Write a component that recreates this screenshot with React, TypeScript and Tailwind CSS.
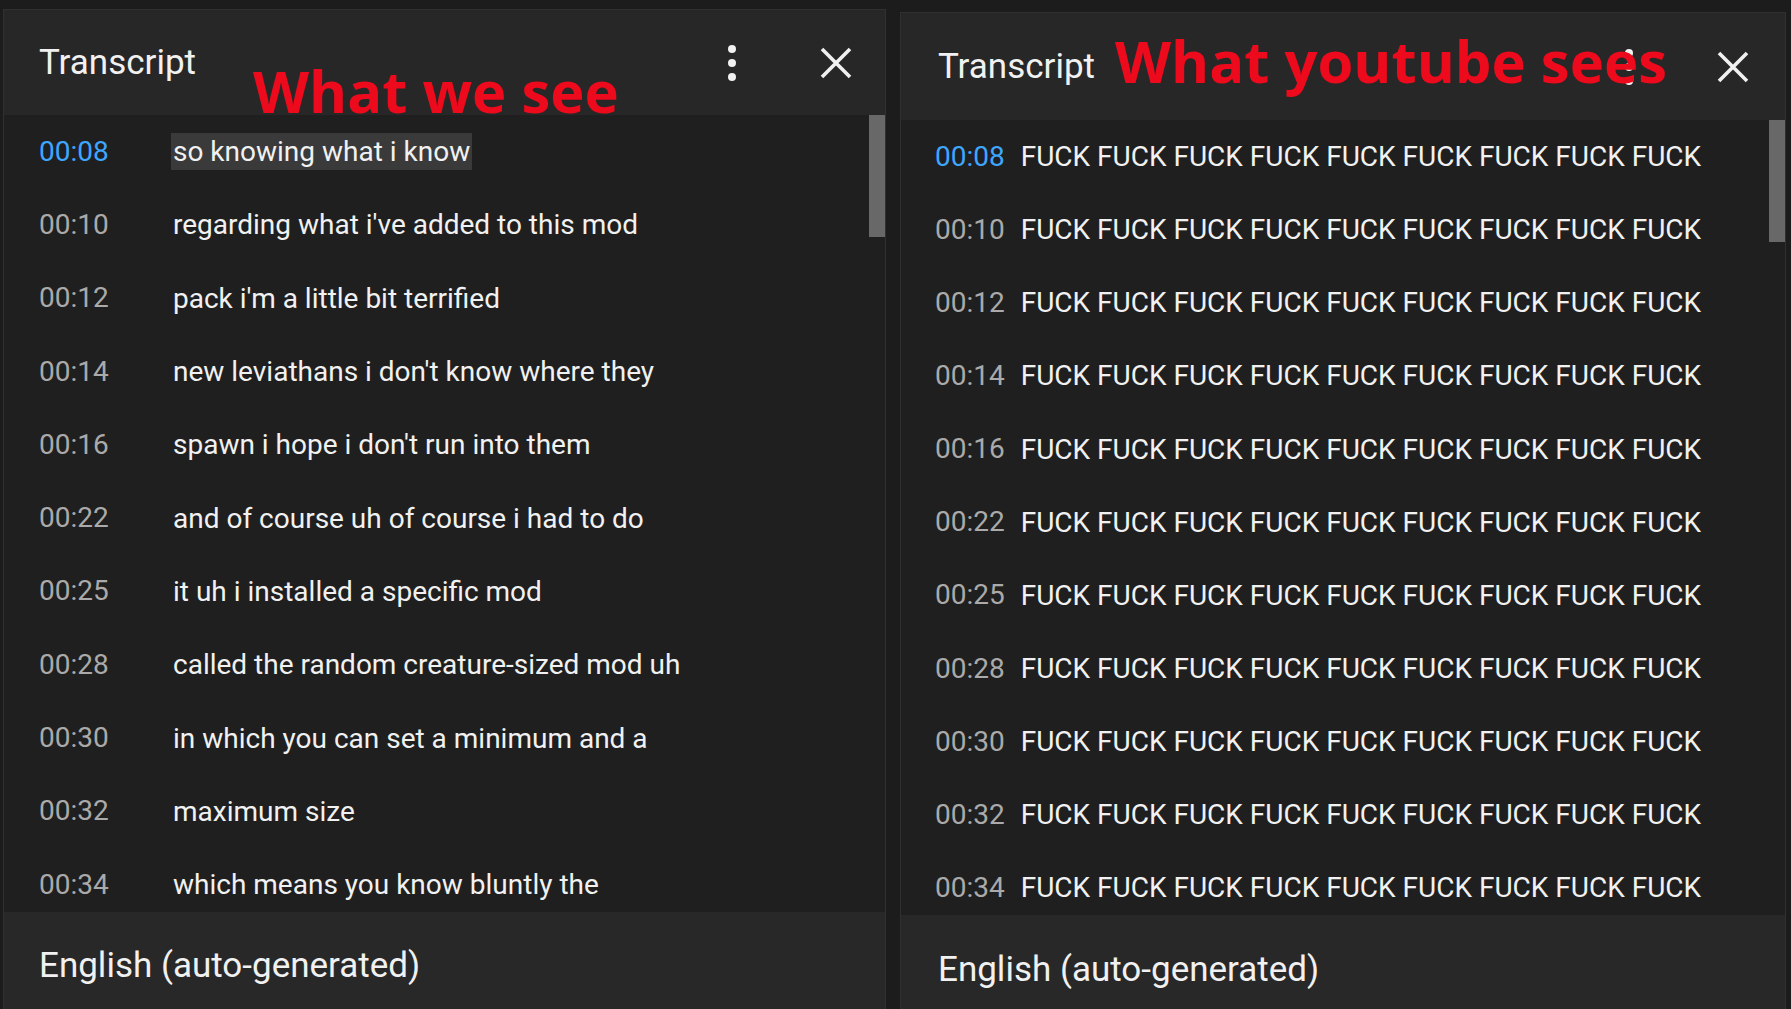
import React from 'react';

const times = ['00:08', '00:10', '00:12', '00:14', '00:16', '00:22', '00:25', '00:28', '00:30', '00:32', '00:34'];

const lines = [
  'so knowing what i know',
  "regarding what i've added to this mod",
  "pack i'm a little bit terrified",
  "new leviathans i don't know where they",
  "spawn i hope i don't run into them",
  'and of course uh of course i had to do',
  'it uh i installed a specific mod',
  'called the random creature-sized mod uh',
  'in which you can set a minimum and a',
  'maximum size',
  'which means you know bluntly the',
];

const fucks = 'FUCK FUCK FUCK FUCK FUCK FUCK FUCK FUCK FUCK';

function Kebab() {
  return (
    <svg width="10" height="38" viewBox="0 0 10 38" className="shrink-0">
      <circle cx="5" cy="5" r="4" fill="#f1f1f1" />
      <circle cx="5" cy="19" r="4" fill="#f1f1f1" />
      <circle cx="5" cy="33" r="4" fill="#f1f1f1" />
    </svg>
  );
}

function Close() {
  return (
    <svg width="32" height="32" viewBox="0 0 32 32" className="shrink-0">
      <path d="M2 2 L30 30 M30 2 L2 30" stroke="#f1f1f1" strokeWidth="3.6" strokeLinecap="butt" />
    </svg>
  );
}

interface PanelProps {
  variant: 'ours' | 'youtube';
}

function Panel({ variant }: PanelProps) {
  const ours = variant === 'ours';
  return (
    <div
      className={
        ours
          ? 'relative w-[883px] h-[1100px] shrink-0 border border-[#303030] bg-[#1f1f1f] flex flex-col'
          : 'relative w-[886px] h-[1100px] shrink-0 border border-[#303030] bg-[#1f1f1f] flex flex-col'
      }
    >
      {/* Header */}
      <div className={ours ? 'h-[105px] bg-[#272727] flex items-center pl-[35px] pr-[33px]' : 'h-[107px] bg-[#272727] flex items-center pl-[37px] pr-[36px]'}>
        <span className="text-[35px] text-[#f1f1f1] leading-none">Transcript</span>
        <div className="ml-auto mr-[83px]">
          <Kebab />
        </div>
        <Close />
      </div>

      {/* Red caption lying over the header */}
      <span
        className={
          ours
            ? "absolute left-[249px] top-[52px] z-10 font-['Open_Sans'] font-bold text-[58px] leading-none text-[#ec0a1c] whitespace-nowrap"
            : "absolute left-[214px] top-[19px] z-10 font-['Open_Sans'] font-bold text-[58px] leading-none text-[#ec0a1c] whitespace-nowrap"
        }
      >
        {ours ? 'What we see' : 'What youtube sees'}
      </span>

      {/* Rows + scrollbar */}
      <div className={ours ? 'h-[797px] flex overflow-hidden' : 'h-[795px] flex overflow-hidden'}>
        <div className="flex-1 flex flex-col">
          {times.map((t, i) => (
            <div
              key={t}
              className={
                ours
                  ? 'h-[73.3px] shrink-0 flex items-center pl-[35px] text-[28px]'
                  : 'h-[73.15px] shrink-0 flex items-center pl-[34px] gap-[16px] text-[28px]'
              }
            >
              <span className={(i === 0 ? 'text-[#3ea6ff]' : 'text-[#aaaaaa]') + (ours ? ' w-[132px] shrink-0' : ' shrink-0')}>
                {t}
              </span>
              <span
                className={
                  (ours && i === 0 ? 'bg-[#3a3a3a] ' : '') +
                  (ours ? 'px-[2px] ' : '') +
                  'leading-[37px] text-[#f1f1f1] whitespace-nowrap'
                }
              >
                {ours ? lines[i] : fucks}
              </span>
            </div>
          ))}
        </div>
        <div className="w-[16px] shrink-0">
          <div className="h-[122px] bg-[#686868]" />
        </div>
      </div>

      {/* Footer */}
      <div className={ours ? 'flex-1 bg-[#282828] pl-[35px] pt-[34px]' : 'flex-1 bg-[#282828] pl-[37px] pt-[35px]'}>
        <span className="text-[35px] leading-[40px] text-[#f1f1f1]">English (auto-generated)</span>
      </div>
    </div>
  );
}

export default function App() {
  return (
    <div className="h-[1009px] w-[1791px] overflow-hidden bg-[#1c1c1c] font-['Roboto','Liberation_Sans',sans-serif]">
      <div className="flex items-start pl-[3px]">
        <div className="pt-[9px]">
          <Panel variant="ours" />
        </div>
        <div className="pt-[12px] ml-[14px]">
          <Panel variant="youtube" />
        </div>
      </div>
    </div>
  );
}
